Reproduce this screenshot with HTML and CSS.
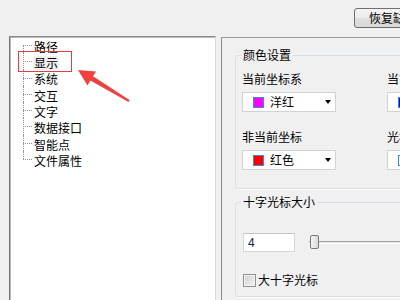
FILE: index.html
```html
<!doctype html>
<html>
<head>
    <meta charset="utf-8">
    <title>选项</title>
    <link rel="stylesheet" href="styles.css">
</head>
<body>
	<div class="window">
		<div class="topbar">
			<button class="btn">恢复缺省</button>
		</div>
		<div class="main">
			<ul class="tree">
				<li><span class="text">路径</span></li>
				<li class="sel"><span class="text">显示</span></li>
				<li><span class="text">系统</span></li>
				<li><span class="text">交互</span></li>
				<li><span class="text">文字</span></li>
				<li><span class="text">数据接口</span></li>
				<li><span class="text">智能点</span></li>
				<li><span class="text">文件属性</span></li>
			</ul>
			<div class="page">
				<div class="group colors">
					<div class="group-title">颜色设置</div>
					<div class="color-grid">
						<div class="field">
							<div class="label">当前坐标系</div>
							<div class="combo"><span class="swatch magenta"></span><span class="combo-text">洋红</span><span class="arrow"></span></div>
						</div>
						<div class="field">
							<div class="label">当前选择集</div>
							<div class="combo"><span class="swatch blue"></span><span class="combo-text">蓝色</span><span class="arrow"></span></div>
						</div>
						<div class="field">
							<div class="label">非当前坐标</div>
							<div class="combo"><span class="swatch red"></span><span class="combo-text">红色</span><span class="arrow"></span></div>
						</div>
						<div class="field">
							<div class="label">光标颜色</div>
							<div class="combo"><span class="swatch white"></span><span class="combo-text">白色</span><span class="arrow"></span></div>
						</div>
					</div>
				</div>
				<div class="group cursor">
					<div class="group-title">十字光标大小</div>
					<div class="size-row">
						<input class="num" type="text" value="4">
						<div class="slider"><span class="thumb"></span></div>
					</div>
					<label class="check"><span class="box"></span>大十字光标</label>
				</div>
			</div>
		</div>
		<!-- annotation -->
		<div class="mark"></div>
		<svg class="pointer" width="140" height="110" viewBox="0 0 140 110">
			<polygon points="78,70 96,71.5 93,76.2 129.5,100.1 128.5,101.9 90.4,80.4 87.5,85.5" fill="#f04040"/>
		</svg>
	</div>
</body>
</html>
```

FILE: styles.css
```css
*{margin:0; padding:0; box-sizing:border-box;}
html,body{overflow:hidden; background:#f0f0f0;}
body{font:12px/16px "Noto Sans CJK SC", "Liberation Sans", sans-serif; color:#000;}
li{list-style:none;}

.window{position:relative; width:440px; height:300px; overflow:hidden; padding:0 8px 0 9px;}

.topbar{display:flex; justify-content:flex-end; padding:8px 2px 8px 0;}
.btn{width:76px; height:20px; font:12px/16px "Noto Sans CJK SC", sans-serif; color:#000; text-align:left; padding-left:14px;
	border:1px solid #707070; border-radius:3px;
	background:linear-gradient(#f4f4f4 0%, #ececec 50%, #e0e0e0 51%, #d8d8d8 100%);}

.main{display:flex; gap:5px; align-items:flex-start;}

/* tree */
.tree{flex:none; width:207px; height:280px; background:#fff; border:1px solid #d9d9d9; border-left-color:#777; border-top-color:#8a8a8a;
	box-shadow:inset 1px 1px 0 #b8b8b8;}
.tree li{position:relative; height:16.3px; line-height:16.3px; padding-left:23px;}
.tree li::before{content:''; position:absolute; left:13px; top:8px; width:9px; border-top:1px dotted #909090;}
.tree li::after{content:''; position:absolute; left:13px; top:0; bottom:0; border-left:1px dotted #909090;}
.tree li:first-child::after{top:8px;}
.tree li:last-child::after{bottom:8px;}
.tree .text{display:inline-block; line-height:14px; padding:0 1px; vertical-align:middle;}
.tree .sel .text{background:#efefef;}

/* right page */
.page{flex:1; min-width:0; margin-top:1px; height:280px; padding:17px 13px 0 13px;
	border-top:1px solid #9a9a9a; border-left:1px solid #8a8a8a;}
.group{border:1px solid #d5dfe5; border-radius:3px; box-shadow:1px 1px 0 #fff; padding:0 6px;}
.group-title{width:max-content; margin:-9px 0 0 -1px; padding:0 2px; background:#f0f0f0;}

.colors{padding-bottom:18px;}
.color-grid{display:grid; grid-template-columns:145px 145px; row-gap:17px; margin-top:8px;}
.label{margin-bottom:5px; white-space:nowrap;}
.combo{display:flex; align-items:center; width:94px; height:20px; background:#fff; border:1px solid #d2d2d2;}
.swatch{width:11px; height:11px; margin-left:10px; border:1px solid #3a8ad8;}
.magenta{background:#ff00ff;}
.red{background:#ff0000;}
.blue{background:#0000ff;}
.white{background:#fff;}
.combo-text{margin-left:6px;}
.arrow{margin-left:auto; margin-right:4px; border-style:solid; border-width:4px 3.5px 0; border-color:#000 transparent transparent;}

.cursor{margin-top:13px; padding-bottom:8px; padding-left:7px;}
.cursor .group-title{margin-left:-2px;}
.size-row{display:flex; align-items:center; margin-top:23px;}
.num{flex:none; width:52px; height:19px; border:1px solid #d3d7dc; border-top-color:#c4c8cc; padding-left:4px; font:12px "Liberation Sans", sans-serif; color:#102060; outline:none;}
.slider{position:relative; flex:1; margin-left:14px; height:3px; border-top:1px solid #a5a5a5; border-bottom:1px solid #fff; background:#e2e2e2;}
.slider .thumb{position:absolute; left:1px; top:-7px; width:9px; height:14px; border:1px solid #7a7a7a; border-radius:2px;
	background:linear-gradient(90deg,#f4f4f4,#dadada);}
.check{display:flex; align-items:center; margin-top:20px; white-space:nowrap;}
.check .box{flex:none; width:13px; height:13px; margin-right:2px; border:1px solid #8f8f8f; box-shadow:inset 0 0 0 1px #f4f4f4;
	background:linear-gradient(135deg,#cfcfcf,#f4f4f4);}

/* annotation */
.mark{position:absolute; left:18px; top:51px; width:54px; height:21px; border:1px solid #e24040;}
.pointer{position:absolute; left:0; top:0;}
```
